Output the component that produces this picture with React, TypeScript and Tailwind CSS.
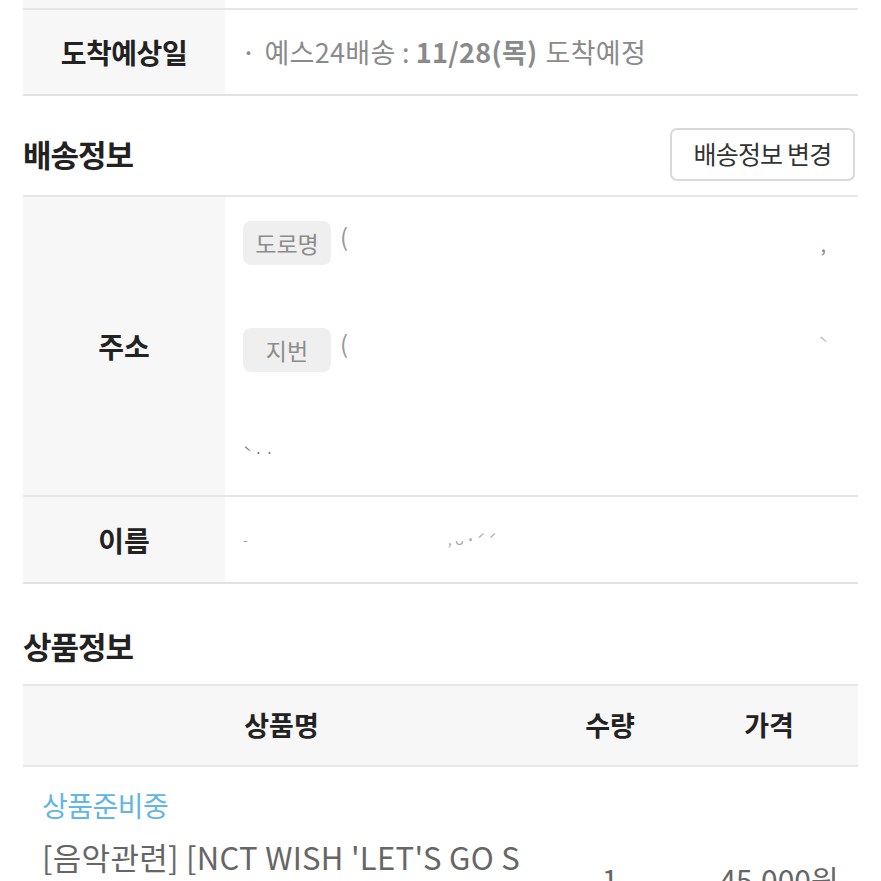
import React from "react";

const font = { fontFamily: '"Noto Sans CJK KR", "Noto Sans", sans-serif' };

export default function App() {
  return (
    <div className="w-[881px] h-[881px] overflow-hidden bg-white px-[23px]" style={font}>
      {/* partial previous row */}
      <div className="flex h-[10px] border-b-2 border-[#e6e6e6]">
        <div className="w-[202px] bg-[#f7f7f7]" />
        <div className="flex-1" />
      </div>
      {/* arrival row */}
      <div className="flex h-[86px] border-b-2 border-[#e2e2e2]">
        <div className="w-[202px] bg-[#f7f7f7] flex items-center justify-center text-[28px] font-bold text-[#222] tracking-[-0.5px]">
          도착예상일
        </div>
        <div className="flex-1 flex items-center pl-[16px] text-[27px] text-[#8a8a8a] tracking-[0.3px] whitespace-nowrap">
          <span className="mr-[8px]">·</span>
          <span>예스24배송 : </span>
          <span className="font-bold ml-[6px]">11/28(목)</span>
          <span className="ml-[8px]">도착예정</span>
        </div>
      </div>
      {/* heading */}
      <div className="flex items-center justify-between h-[99px] pt-[17px]">
        <div className="text-[31px] font-bold text-[#222] tracking-[-1px]">배송정보</div>
        <button className="h-[53px] w-[185px] mr-[3px] rounded-[7px] border-2 border-[#d9d9d9] bg-white text-[25px] text-[#333] tracking-[-0.8px] flex items-center justify-center">
          배송정보 변경
        </button>
      </div>
      {/* address row */}
      <div className="flex h-[302px] border-t-2 border-b-2 border-[#e6e6e6]">
        <div className="w-[202px] bg-[#f7f7f7] flex items-center justify-center text-[28px] font-bold text-[#222]">
          주소
        </div>
        <div className="flex-1 pl-[18px] pt-[24px] relative">
          <div className="flex items-start">
            <span className="w-[88px] h-[44px] rounded-[8px] bg-[#efefef] text-[#8c8c8c] text-[23px] flex items-center justify-center">
              도로명
            </span>
            <span className="ml-[9px] text-[24px] text-[#999] leading-[30px]">(</span>
            <span className="ml-auto mr-[32px] mt-[8px] text-[20px] text-[#888] leading-[30px]">,</span>
          </div>
          <div className="flex items-start mt-[63px]">
            <span className="w-[88px] h-[44px] rounded-[8px] bg-[#efefef] text-[#8c8c8c] text-[23px] flex items-center justify-center">
              지번
            </span>
            <span className="ml-[9px] text-[24px] text-[#999] leading-[30px]">(</span>
            <span className="ml-auto mr-[30px] text-[16px] text-[#bbb] leading-[30px]">ˋ</span>
          </div>
          <div className="mt-[72px] text-[14px] text-[#777] leading-[16px]">ˋ · ·</div>
        </div>
      </div>
      {/* name row */}
      <div className="flex h-[87px] border-b-2 border-[#e2e2e2]">
        <div className="w-[202px] bg-[#f7f7f7] flex items-center justify-center text-[28px] font-bold text-[#222]">
          이름
        </div>
        <div className="flex-1 flex items-center pl-[18px] text-[14px] text-[#aaa]">
          <span>-</span>
          <span className="ml-[200px]">, ᴗ ˙ ˊ ˊ</span>
        </div>
      </div>
      {/* product heading */}
      <div className="h-[100px] flex items-center pt-[24px]">
        <div className="text-[31px] font-bold text-[#222] tracking-[-1px]">상품정보</div>
      </div>
      {/* table header */}
      <div className="flex h-[83px] border-t-2 border-b-2 border-[#e6e6e6] bg-[#f7f7f7] text-[27px] font-bold text-[#222]">
        <div className="w-[517px] flex items-center justify-center">상품명</div>
        <div className="w-[140px] flex items-center justify-center">수량</div>
        <div className="flex-1 flex items-center justify-center">가격</div>
      </div>
      {/* product row */}
      <div className="flex">
        <div className="w-[517px] pl-[19px] pt-[21px]">
          <div className="text-[28px] text-[#62b5e7] leading-[34px] tracking-[-0.5px]">상품준비중</div>
          <div className="mt-[16px] text-[31px] text-[#666] leading-[38px] tracking-[0.3px] whitespace-nowrap">
            [음악관련] [NCT WISH 'LET'S GO S
          </div>
        </div>
        <div className="w-[140px] pt-[93px] flex justify-center text-[30px] text-[#666] leading-[38px]">1</div>
        <div className="flex-1 pt-[93px] pl-[20px] flex justify-center text-[30px] text-[#666] leading-[38px]">45,000원</div>
      </div>
    </div>
  );
}
